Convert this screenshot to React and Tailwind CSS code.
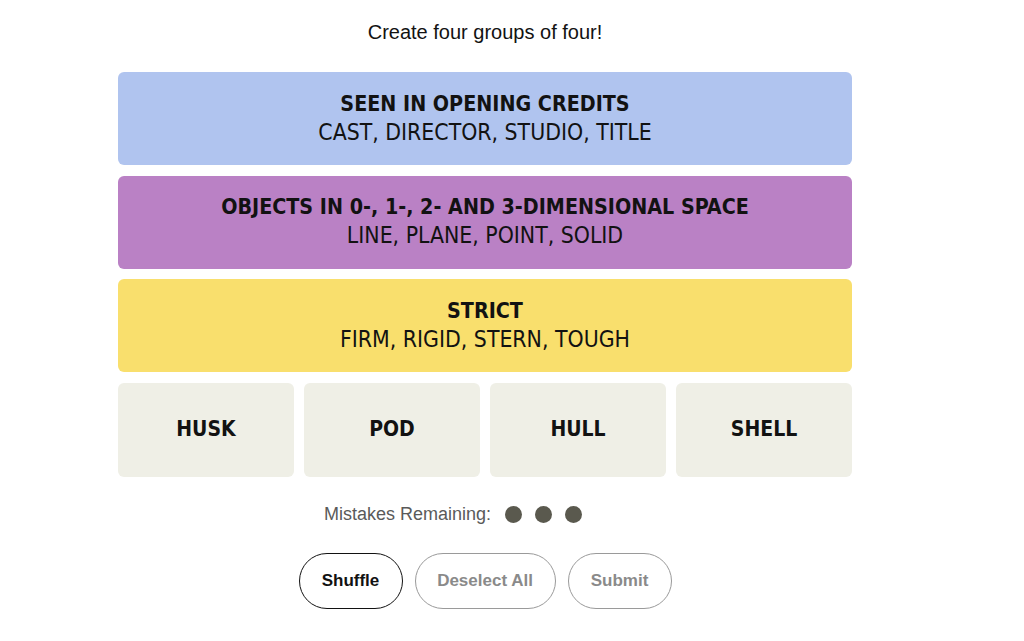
import React from "react";

const groups = [
  { title: "SEEN IN OPENING CREDITS", words: "CAST, DIRECTOR, STUDIO, TITLE", bg: "bg-[#b0c4ef]" },
  { title: "OBJECTS IN 0-, 1-, 2- AND 3-DIMENSIONAL SPACE", words: "LINE, PLANE, POINT, SOLID", bg: "bg-[#ba81c5]" },
  { title: "STRICT", words: "FIRM, RIGID, STERN, TOUGH", bg: "bg-[#f9df6d]" },
];

const tiles = ["HUSK", "POD", "HULL", "SHELL"];

const condensed = { fontFamily: '"Liberation Sans Narrow", "DejaVu Sans Condensed", "Liberation Sans", sans-serif' };

export default function App() {
  return (
    <div className="min-h-[641px] bg-white text-[#121212]" style={{ fontFamily: '"Liberation Sans", Arial, sans-serif' }}>
      <div className="ml-[118px] w-[734px] flex flex-col items-center">
        <p className="mt-[20px] h-[24px] text-[20px] leading-[24px]">Create four groups of four!</p>
        <div className="mt-[28px] w-full flex flex-col gap-[10.5px]">
          {groups.map((g) => (
            <div key={g.title} className={`${g.bg} h-[93px] pb-[2px] rounded-[6px] flex flex-col items-center justify-center`} style={condensed}>
              <div className="text-[21.3px] leading-[29px] font-bold">{g.title}</div>
              <div className="text-[22.8px] leading-[29px]">{g.words}</div>
            </div>
          ))}
          <div className="grid grid-cols-4 gap-[10px]">
            {tiles.map((t) => (
              <div key={t} className="h-[94px] rounded-[6px] bg-[#efefe6] flex items-center justify-center text-[21px] font-bold" style={condensed}>
                {t}
              </div>
            ))}
          </div>
        </div>
        <div className="mt-[24px] pr-[34px] flex items-center gap-[14px]">
          <span className="text-[18px] text-[#5a5a5a]">Mistakes Remaining:</span>
          <div className="flex gap-[13px]">
            <span className="w-[17px] h-[17px] rounded-full bg-[#5a594e]" />
            <span className="w-[17px] h-[17px] rounded-full bg-[#5a594e]" />
            <span className="w-[17px] h-[17px] rounded-full bg-[#5a594e]" />
            <span className="w-[17px] h-[17px] rounded-full bg-[#5a594e] invisible" />
          </div>
        </div>
        <div className="mt-[25px] flex gap-[12px]">
          <button className="w-[104px] h-[56px] rounded-full border border-[#121212] text-[17px] font-bold text-[#121212]">Shuffle</button>
          <button className="w-[141px] h-[56px] rounded-full border border-[#9a9a9a] text-[17px] font-bold text-[#8a8a8a]">Deselect All</button>
          <button className="w-[104px] h-[56px] rounded-full border border-[#9a9a9a] text-[17px] font-bold text-[#8a8a8a]">Submit</button>
        </div>
      </div>
    </div>
  );
}
